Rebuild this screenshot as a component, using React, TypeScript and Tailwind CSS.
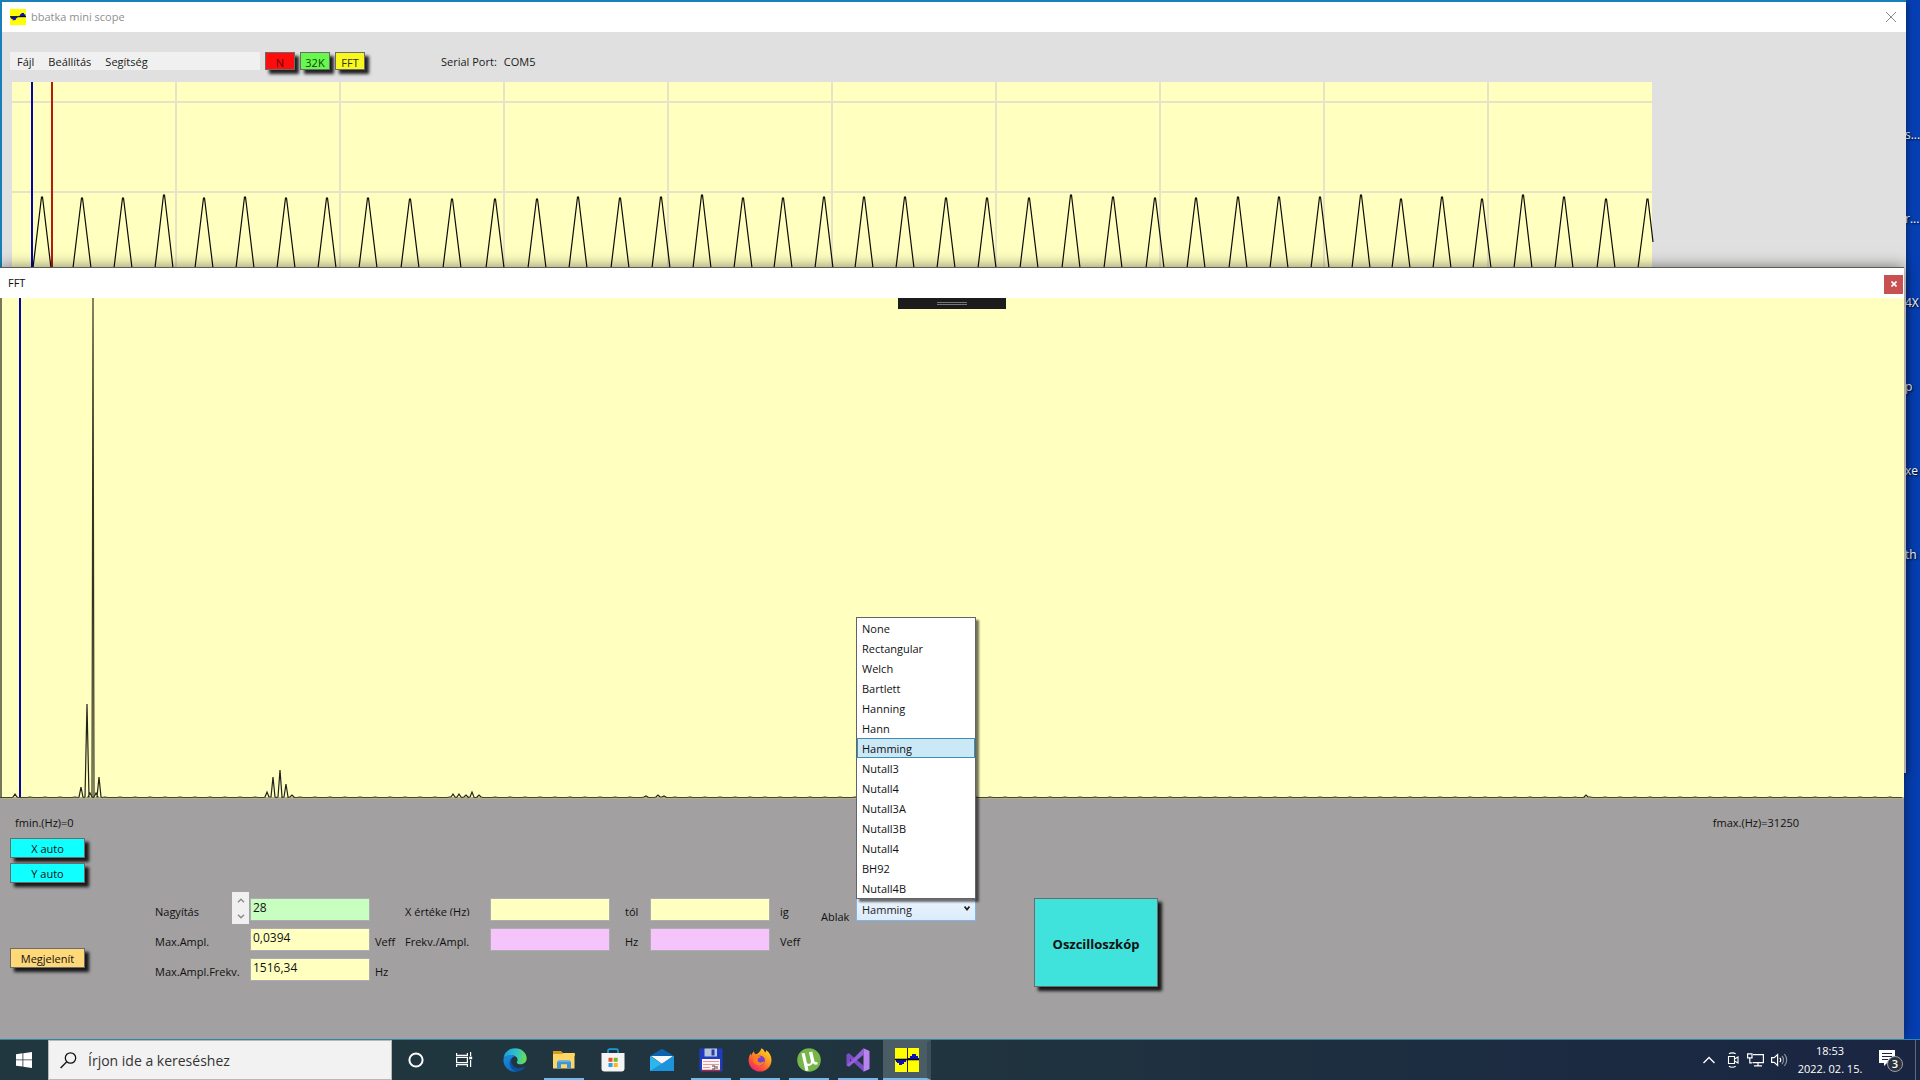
import React, { useState } from 'react';

type Spike = [x: number, height: number];

const windowTypes = [
    'None',
    'Rectangular',
    'Welch',
    'Bartlett',
    'Hanning',
    'Hann',
    'Hamming',
    'Nutall3',
    'Nutall4',
    'Nutall3A',
    'Nutall3B',
    'Nutall4',
    'BH92',
    'Nutall4B',
];

// crest positions of the sampled signal, relative to the chart
const crests: [number, number][] = [
    [30, 115], [70, 116], [111, 116], [152, 113], [192, 116], [233, 115], [274, 116], [315, 116],
    [356, 116], [398, 117], [440, 117], [483, 117], [525, 117], [566, 115], [608, 116], [649, 115],
    [690, 113], [731, 116], [771, 116], [812, 115], [852, 115], [893, 115], [934, 116], [975, 116],
    [1017, 116], [1059, 113], [1101, 115], [1143, 116], [1184, 116], [1226, 115], [1267, 115], [1308, 115],
    [1349, 113], [1389, 117], [1430, 115], [1470, 117], [1511, 113], [1552, 115], [1594, 117],
];

const spikes: Spike[] = [
    [15, 3], [81, 10], [87, 93], [90, 4], [96, 4], [99, 20], [267, 5], [273, 20],
    [280, 27], [286, 13], [292, 2], [453, 3], [459, 3], [466, 2], [472, 5], [479, 2],
    [646, 1], [658, 2], [664, 1], [1586, 2],
];

const signalPath =
    crests.map(([x, y]) => `M${x - 9} 186L${x - 0.5} ${y}L${x + 0.5} ${y}L${x + 9} 186`).join('') +
    'M1626 186L1635 117L1636 117L1641 160';

const spectrumPath = (() => {
    let d = 'M0 499.5';
    for (let x = 3; x < 1904; x += 3) {
        const spike = spikes.find(([sx]) => sx >= x - 1 && sx <= x + 1);
        if (spike) {
            d += `L${spike[0] - 2} 499L${spike[0]} ${499 - spike[1]}L${spike[0] + 2} 499`;
        } else {
            d += `L${x} ${(x * 7) % 5 === 0 ? 499 : 499.5}`;
        }
    }
    return d;
})();

const ScopeIcon: React.FC<{ className?: string; split?: boolean }> = (props): React.ReactElement => (
    <svg viewBox="0 0 24 24" preserveAspectRatio="none" className={props.className} aria-hidden="true">
        <rect width="24" height="24" fill="#ffff00" />
        {props.split && <path d="M12.5 0v24" stroke="#222" strokeWidth="1" />}
        <path d="M1 12h10v2H9v2H7v1H4v-2H2v-1H1zM13 12v-2h2V8h2V6h4v2h2v2h1v2z" fill="#0b10b8" />
        <path d="M0 11.5h24" stroke="#050530" strokeWidth="1.6" />
    </svg>
);

const ToolButton: React.FC<{ label: string; className: string }> = (props): React.ReactElement => (
    <button
        type="button"
        className={`border border-[#6b6b6b] pt-0.5 text-center leading-4 shadow-[4px_4px_3px_rgba(0,0,0,0.85)] ${props.className}`}
    >
        {props.label}
    </button>
);

const Field: React.FC<{ id?: string; label?: string; value?: string; className: string }> = (props): React.ReactElement => (
    <input
        id={props.id}
        aria-label={props.label}
        defaultValue={props.value}
        className={`h-[23px] w-[120px] border border-[#abadb3] px-0.5 pb-1 text-xs leading-4 outline-none ${props.className}`}
    />
);

const Chevron: React.FC<{ up?: boolean }> = (props): React.ReactElement => (
    <svg viewBox="0 0 8 5" className="h-[5px] w-2" fill="none" stroke="#8a8a8a" strokeWidth="1.4">
        <path d={props.up ? 'M1 4.2L4 1.2l3 3' : 'M1 .8l3 3 3-3'} />
    </svg>
);

const MainWindow: React.FC = (): React.ReactElement => (
    <section className="absolute top-0.5 right-[14px] left-0.5 h-[771px] overflow-hidden bg-[#e0e0e0] shadow-[-1px_-1px_0_1px_#1a7fb8,0_0_8px_rgba(0,0,0,0.5)]">
        <header className="flex h-[30px] items-center bg-white pr-2.5 pl-2">
            <ScopeIcon className="h-4 w-4" />
            <h1 className="ml-[5px] text-[11px] text-[#8f8f8f]">bbatka mini scope</h1>
            <button type="button" aria-label="Close" className="ml-auto">
                <svg viewBox="0 0 10 10" className="size-2.5" stroke="#8a8a8a" strokeWidth="1">
                    <path d="M0 0l10 10M10 0L0 10" />
                </svg>
            </button>
        </header>
        <div className="mt-5 ml-2 flex h-[18px] items-center text-[11px]">
            <nav className="flex h-[18px] w-[250px] items-center gap-[14px] bg-[#f0f0f0] pt-0.5 pl-[7px]">
                <button type="button">Fájl</button>
                <button type="button">Beállítás</button>
                <button type="button">Segítség</button>
            </nav>
            <div className="ml-[5px] flex gap-[5px]">
                <ToolButton label="N" className="h-[18px] w-[30px] bg-[#ff0d0d] text-[#5c0000]" />
                <ToolButton label="32K" className="h-[18px] w-[30px] bg-[#66f84c] text-[#12400a]" />
                <ToolButton label="FFT" className="h-[18px] w-[30px] bg-[#f8f820] text-[#33330a]" />
            </div>
            <p className="ml-[76px] flex gap-[7px] pt-0.5">
                <span>Serial Port:</span>
                <span>COM5</span>
            </p>
        </div>
        <div className="mt-3 mr-[254px] ml-2.5 h-[190px] bg-[#ffffc0]">
            <svg viewBox="0 0 1640 190" preserveAspectRatio="none" className="h-full w-full overflow-visible" fill="none">
                <path
                    d="M0 20h1640M0 110h1640M164 0v190M328 0v190M492 0v190M656 0v190M820 0v190M984 0v190M1148 0v190M1312 0v190M1476 0v190"
                    stroke="#e6e3c6"
                    strokeWidth="2"
                />
                <path d={signalPath} stroke="#0c0c06" strokeWidth="1.2" />
                <path d="M20 0v190" stroke="#0505a8" strokeWidth="2" />
                <path d="M40 0v190" stroke="#b81c08" strokeWidth="2" />
            </svg>
        </div>
    </section>
);

const WindowPicker: React.FC = (): React.ReactElement => {
    const [selected, setSelected] = useState(6);

    return (
        <div className="relative w-[120px]">
            <select
                id="ablak"
                value={selected}
                onChange={(e) => setSelected(Number(e.target.value))}
                className="block h-[23px] w-full appearance-none border border-[#7eb4ea] bg-linear-to-b from-[#ebf4fc] to-[#dcecfc] pt-0.5 pl-[5px] text-[11px] text-[#222] outline-none"
            >
                {windowTypes.map((name, i) => (
                    <option key={i} value={i}>
                        {name}
                    </option>
                ))}
            </select>
            <svg viewBox="0 0 6 5" className="pointer-events-none absolute top-2 right-1.5 h-[5px] w-1.5" fill="none" stroke="#222" strokeWidth="1.6">
                <path d="M.6 .6L3 3.6 5.4 .6" />
            </svg>
            <ul
                role="listbox"
                aria-label="Ablak"
                className="absolute bottom-[22px] left-0 w-full border border-[#646464] bg-white shadow-[3px_3px_2px_rgba(0,0,0,0.55)]"
            >
                {windowTypes.map((name, i) => (
                    <li
                        key={i}
                        role="option"
                        aria-selected={i === selected}
                        onClick={() => setSelected(i)}
                        className={`h-5 border pl-1 text-[11px] leading-5 ${i === selected ? 'border-[#3c8fb5] bg-[#cbe8f6]' : 'border-transparent'}`}
                    >
                        {name}
                    </li>
                ))}
            </ul>
        </div>
    );
};

const FftWindow: React.FC = (): React.ReactElement => (
    <section className="absolute top-[267px] right-4 bottom-[41px] left-0 flex flex-col border-t border-[#5c5c50] bg-[#a2a0a0] text-[11px] text-[#111] shadow-[0_0_14px_rgba(0,0,0,0.5)]">
        <header className="flex h-[30px] shrink-0 items-center bg-white pr-px pl-2">
            <h2>FFT</h2>
            <button type="button" aria-label="Close" className="mt-0.5 ml-auto flex h-[19px] w-[19px] items-center justify-center bg-[#c75050]">
                <svg viewBox="0 0 6 6" className="size-1.5" stroke="#fff" strokeWidth="1.6">
                    <path d="M.5 .5l5 5M5.5 .5l-5 5" />
                </svg>
            </button>
        </header>
        <div className="relative min-h-0 flex-1 bg-[#ffffc0]">
            <svg viewBox="0 0 1904 501" preserveAspectRatio="none" className="absolute inset-0 h-full w-full" fill="none">
                <path d="M1 0v499" stroke="#77775c" strokeWidth="2" />
                <path d={spectrumPath} stroke="#22221a" strokeWidth="1.2" />
                <path d="M0 500h1904" stroke="#66664c" strokeWidth="1" />
                <path d="M92 499l1-499M94 499l-1-499" stroke="#33331f" strokeWidth="1.2" />
                <path d="M20 0v499" stroke="#0505a8" strokeWidth="2" />
            </svg>
            <div className="absolute top-0 left-1/2 ml-[-54px] flex h-[11px] w-[108px] flex-col items-center justify-center gap-px bg-[#1c1c1c]">
                <span className="h-px w-[30px] bg-[#777]" />
                <span className="h-px w-[30px] bg-[#777]" />
            </div>
        </div>
        <div className="h-[240px] shrink-0 pt-3.5">
            <div className="flex justify-between pr-[105px] pl-[15px] leading-5">
                <span>fmin.(Hz)=0</span>
                <span>fmax.(Hz)=31250</span>
            </div>
            <div className="mt-[5px] flex pl-2.5">
                <div className="flex w-[75px] flex-col gap-[5px]">
                    <ToolButton label="X auto" className="h-5 bg-[#10ffff]" />
                    <ToolButton label="Y auto" className="h-5 bg-[#10ffff]" />
                    <ToolButton label="Megjelenít" className="mt-[60px] h-5 bg-[#ffd878]" />
                </div>
                <div className="mt-[60px] ml-[70px] flex items-start">
                    <div className="grid auto-rows-[23px] grid-cols-[77px_18px_125px_30px_85px_135px_25px_130px_41px] gap-y-[7px] leading-[23px]">
                        <label htmlFor="nagyitas" className="pt-0.5">
                            Nagyítás
                        </label>
                        <div className="-mt-1.5 flex h-8 w-[17px] flex-col items-center justify-around bg-[#f0f0f0]">
                            <button type="button" aria-label="Increase">
                                <Chevron up />
                            </button>
                            <button type="button" aria-label="Decrease">
                                <Chevron />
                            </button>
                        </div>
                        <Field id="nagyitas" value="28" className="bg-[#c8ffc0]" />
                        <span />
                        <label htmlFor="tol" className="h-[18px] overflow-hidden pt-0.5">
                            X értéke (Hz)
                        </label>
                        <Field id="tol" className="bg-[#ffffc0]" />
                        <span className="pt-0.5">tól</span>
                        <Field label="X értéke (Hz) ig" className="bg-[#ffffc0]" />
                        <span className="pt-0.5">ig</span>

                        <label htmlFor="maxampl" className="pt-0.5">
                            Max.Ampl.
                        </label>
                        <span />
                        <Field id="maxampl" value="0,0394" className="bg-[#ffffc0]" />
                        <span className="pt-0.5">Veff</span>
                        <label htmlFor="frekv" className="pt-0.5">
                            Frekv./Ampl.
                        </label>
                        <Field id="frekv" className="bg-[#f5c4fa]" />
                        <span className="pt-0.5">Hz</span>
                        <Field label="Amplitúdó" className="bg-[#f5c4fa]" />
                        <span className="pt-0.5">Veff</span>

                        <label htmlFor="maxfrekv" className="pt-0.5">
                            Max.Ampl.Frekv.
                        </label>
                        <span />
                        <Field id="maxfrekv" value="1516,34" className="bg-[#ffffc0]" />
                        <span className="pt-0.5">Hz</span>
                    </div>
                    <label htmlFor="ablak" className="w-[35px] pt-[7px] leading-[23px]">
                        Ablak
                    </label>
                    <WindowPicker />
                    <ToolButton label="Oszcilloszkóp" className="ml-[58px] h-[89px] w-[124px] bg-[#40e2dc] text-[13px] font-bold" />
                </div>
            </div>
        </div>
    </section>
);

const EdgeIcon = () => (
    <svg viewBox="0 0 24 24" className="size-6">
        <defs>
            <linearGradient id="edgeTop" x1="0" y1="0.3" x2="1" y2="0.4">
                <stop offset="0" stopColor="#1e9de0" />
                <stop offset="0.55" stopColor="#2fc2c8" />
                <stop offset="1" stopColor="#6be04c" />
            </linearGradient>
            <linearGradient id="edgeLow" x1="0" y1="0" x2="0.6" y2="1">
                <stop offset="0" stopColor="#1992e0" />
                <stop offset="1" stopColor="#1068c0" />
            </linearGradient>
        </defs>
        <path d="M.5 10C1.5 4 6 .3 12 .3c7 0 11.7 5 11.7 10 0 3.600-2.700 6-6 6-2.600 0-4-1-4-1.800 0-.6.9-1 .9-2.700 0-2.400-2.600-4.600-6-4.600C4.500 7.200 1.500 9 .5 10z" fill="url(#edgeTop)" />
        <path d="M.4 11.500c.7-3 4-4.600 7-4.600 2 0 3.600.7 4.600 1.700-2.600 0-4.500 2.700-4.500 5.700 0 5 4 8.400 7.500 9C8 25.500.2 20 .4 11.500z" fill="url(#edgeLow)" />
        <path d="M8.400 11c-.8 4.500 2.200 9.200 7.400 9.200 2.600 0 4.600-.9 5.800-1.600.4-.2.700.1.400.5-1.600 2.500-4.200 4.200-7.400 4.500-4.500-.6-7.900-4.200-7.900-8.600 0-1.500.6-3 1.700-4z" fill="#0c4f9c" />
    </svg>
);

const ExplorerIcon = () => (
    <svg viewBox="0 0 24 24" className="size-6">
        <path d="M1 3h8l2 2h12v3H1z" fill="#d99a1c" />
        <path d="M1 6h9l2-1h10.500v15.500H1z" fill="#ffd666" />
        <path d="M5 20.500v-6.500l1.500-1.500h11L19 14v6.500h-4v-4.200H9v4.200z" fill="#3f96d6" />
        <path d="M5 14l1.500-1.500h11L19 14z" fill="#62b3ea" />
    </svg>
);

const StoreIcon = () => (
    <svg viewBox="0 0 24 24" className="size-6">
        <path d="M7 6V2.800C7 1.800 7.700 1.200 8.600 1.200h6.800c.9 0 1.600.6 1.600 1.600V6" fill="none" stroke="#1a9ad8" strokeWidth="1.7" />
        <path d="M.5 5h23v15.500c0 2-1 3-3 3h-17c-2 0-3-1-3-3z" fill="#f4f4f4" />
        <path d="M7.500 9.800h4v4h-4z" fill="#e8502a" />
        <path d="M12.700 9.800h4v4h-4z" fill="#7cb928" />
        <path d="M7.500 15h4v4h-4z" fill="#28a2e4" />
        <path d="M12.700 15h4v4h-4z" fill="#fbb714" />
    </svg>
);

const MailIcon = () => (
    <svg viewBox="0 0 24 24" className="size-6">
        <path d="M0 8L12 .8 24 8v3H0z" fill="#0b62ae" />
        <path d="M1 8h22L12 16z" fill="#f5f8fa" />
        <path d="M0 8l12 8 12-8v15H0z" fill="#2fb5ee" />
        <path d="M0 23L24 8v15z" fill="#1c94dc" />
    </svg>
);

const FloppyIcon = () => (
    <svg viewBox="0 0 24 24" className="size-6">
        <path d="M.5.500h23v23H2l-1.500-1.500z" fill="#1f3cc0" />
        <path d="M5.500.5h12.500v8H5.500z" fill="#b8c6dc" />
        <path d="M12.500 1.500h3v6h-3z" fill="#2440a8" />
        <path d="M3 11h18v11H3z" fill="#fbf4f4" />
        <path d="M4 13.500h16M4 16.500h16M4 19.500h7" stroke="#e39a9f" strokeWidth="1.200" />
        <path d="M13 18h3v3h-3M18 18v3" stroke="#444" strokeWidth="1" fill="none" />
        <path d="M2.500 22.500h19" stroke="#b02838" strokeWidth="1.500" />
    </svg>
);

const FirefoxIcon = () => (
    <svg viewBox="0 0 24 24" className="size-6">
        <defs>
            <linearGradient id="fox" x1="0.9" y1="0" x2="0.2" y2="1">
                <stop offset="0" stopColor="#ffe226" />
                <stop offset="0.4" stopColor="#ff9a1f" />
                <stop offset="0.75" stopColor="#ff4a3c" />
                <stop offset="1" stopColor="#e8207c" />
            </linearGradient>
        </defs>
        <path d="M13.500.2c2 1 3.200 2.800 3.500 4.300 1-.3 1.300-1.700 1-2.500 3.700 2.500 5.700 6.500 5.500 10.500C23.200 19 18 23.600 12 23.600S.6 19 .6 12.500c0-3 1-5.500 2.300-7.200 0 1 .2 1.600.5 2.200C4 5.400 4.900 4 6 3.200c0 1.300.6 2.300 1.700 3C10 6 12 4 13.500.2z" fill="url(#fox)" />
        <circle cx="11.800" cy="12.800" r="5.200" fill="#7440d0" />
        <path d="M7 7.500c3-1 5 .4 6 1.700-1 .4-2.800.4-3.200 2-.6 2 1 3.500 3 3.300 1.800-.2 2.600-1.200 4-.8-1 3-4 4.600-7 3.800C6 16.500 4.500 13 5.500 9.500z" fill="#ff7d22" />
    </svg>
);

const TorrentIcon = () => (
    <svg viewBox="0 0 24 24" className="size-6">
        <circle cx="12" cy="12" r="11.800" fill="#76b548" />
        <path d="M4.500 5.500l3.200-.6 2 9c.4 1.600 1.400 2.200 2.700 1.800 1.400-.4 1.800-1.400 1.500-2.800l-2-8.700 3.300-.6 2.100 9c.4 1.500 1.200 1.900 2.800 1.500l.7 2.100c-2.200.8-4 .5-4.900-1.100-.8 2-2.800 3.300-5.300 2.600l.9 4.900-3 .3z" fill="#fff" />
    </svg>
);

const StudioIcon = () => (
    <svg viewBox="0 0 24 24" className="size-6">
        <path d="M.5 6.500L3 5.300 18 23.500l-1-5L3 6.500z" fill="#6a3cb0" />
        <path d="M.5 6.500L3 5.300l14.500 12.200v6L4 11v6.500L.5 17z" fill="#7c4cc4" />
        <path d="M3 18.700L.5 17.500 17.500.3v6.500z" fill="#9560dc" />
        <path d="M17.500.3L23.500 3v18l-6 2.700z" fill="#b983f0" />
    </svg>
);

const apps = [
    { name: 'Edge', icon: <EdgeIcon />, bar: '' },
    { name: 'Fájlkezelő', icon: <ExplorerIcon />, bar: 'border-b-[#76b9ed]' },
    { name: 'Store', icon: <StoreIcon />, bar: '' },
    { name: 'Mail', icon: <MailIcon />, bar: '' },
    { name: 'Total Commander', icon: <FloppyIcon />, bar: 'border-b-[#76b9ed]' },
    { name: 'Firefox', icon: <FirefoxIcon />, bar: 'border-b-[#76b9ed]' },
    { name: 'Torrent', icon: <TorrentIcon />, bar: 'border-b-[#76b9ed]' },
    { name: 'Visual Studio', icon: <StudioIcon />, bar: 'border-b-[#76b9ed]' },
];

const Taskbar: React.FC = (): React.ReactElement => (
    <footer className="absolute inset-x-0 bottom-0 flex h-[41px] border-t border-[#2f86a8] bg-linear-to-r from-[#20373f] via-[#20343f] to-[#1a2542] text-white">
        <button type="button" aria-label="Start" className="flex w-12 items-center justify-center">
            <svg viewBox="0 0 16 16" className="size-4" fill="#fff">
                <path d="M0 2.200L6.500 1.300v6.200H0zM7.300 1.200L16 0v7.500H7.300zM0 8.300h6.500v6.300L0 13.700zM7.300 8.300H16V16l-8.700-1.200z" />
            </svg>
        </button>
        <label className="flex w-[344px] items-center border border-[#b8b8b8] bg-[#f2f2f2] pl-[11px]">
            <svg viewBox="0 0 17 17" className="size-[17px]" fill="none" stroke="#111" strokeWidth="1.300">
                <circle cx="10.500" cy="6" r="5.200" />
                <path d="M6.800 9.800L.6 16" />
            </svg>
            <input
                aria-label="Keresés"
                placeholder="Írjon ide a kereséshez"
                className="ml-[11px] flex-1 bg-transparent pt-0.5 text-sm outline-none placeholder:text-[#333]"
            />
        </label>
        <button type="button" aria-label="Cortana" className="flex w-12 items-center justify-center">
            <svg viewBox="0 0 16 16" className="size-4" fill="none" stroke="#fff" strokeWidth="2">
                <circle cx="8" cy="8" r="6.600" />
            </svg>
        </button>
        <button type="button" aria-label="Feladatnézet" className="flex w-12 items-center justify-center">
            <svg viewBox="0 0 17 16" className="h-4 w-[17px]" fill="none" stroke="#fff" strokeWidth="1.200">
                <path d="M.6 1v2.400h10.800V1M.6 15v-2.400h10.800V15M.6 5.400h10.800v5.200H.6zM14.600 0v4M14.600 8v7" />
                <path d="M13.200 4.600h3v2.600h-3z" fill="#fff" stroke="none" />
            </svg>
        </button>
        <div className="ml-0.5 flex">
            {apps.map((app) => (
                <button
                    key={app.name}
                    type="button"
                    aria-label={app.name}
                    className="flex w-[49px] items-center justify-center px-1"
                >
                    <span className={`flex h-full w-10 items-center justify-center border-y-2 border-t-transparent ${app.bar || 'border-b-transparent'}`}>
                        {app.icon}
                    </span>
                </button>
            ))}
            <button
                type="button"
                aria-label="bbatka mini scope"
                className="ml-px flex w-12 items-center justify-center border-y-2 border-r-4 border-t-[#4a5d65] border-r-[#3c5059] border-b-[#76b9ed] bg-[#4a5d65] pl-1"
            >
                <ScopeIcon split className="size-6" />
            </button>
        </div>
        <div className="ml-auto flex items-center">
            <svg viewBox="0 0 12 8" className="h-2 w-3" fill="none" stroke="#fff" strokeWidth="1.400">
                <path d="M.5 7L6 1.500 11.500 7" />
            </svg>
            <svg viewBox="0 0 12 16" className="ml-3 h-4 w-3" fill="none" stroke="#fff" strokeWidth="1.100">
                <path d="M1.500 4.500h6v7h-6zM7.500 7l3.500-2v6L7.500 9M2 1.800c1.600-1.300 5-1.300 6.600 0M2 14.200c1.600 1.300 5 1.300 6.600 0" />
            </svg>
            <svg viewBox="0 0 17 14" className="ml-2 h-[14px] w-[17px]" fill="none" stroke="#fff" strokeWidth="1.200">
                <path d="M6 1.600h10.400v8H5.500M11 9.600v3.200M7 12.900h8M.6.800h4.400v4H.6zM2.800 4.800v5H5" />
            </svg>
            <svg viewBox="0 0 17 14" className="ml-[7px] h-[14px] w-[17px]" fill="none" stroke="#fff" strokeWidth="1.200">
                <path d="M.6 4.600h2.600L6.600 1.500v11L3.200 9.400H.6zM8.800 4.800c1 1.200 1 3.200 0 4.400" />
                <path d="M11 3c2 2.200 2 5.800 0 8M13.400 1.200c3 3.200 3 8.400 0 11.600" stroke="#8a93a3" />
            </svg>
            <time className="ml-2 flex w-[68px] flex-col text-center text-[11px] leading-[18px]">
                <span>18:53</span>
                <span>2022. 02. 15.</span>
            </time>
            <button type="button" aria-label="3 értesítés" className="relative ml-[15px] h-6 w-6">
                <svg viewBox="0 0 24 24" className="size-6">
                    <path d="M0 2h16v13H8l-3 3v-3H0z" fill="#fff" />
                    <path d="M3 5.500h10M3 8.500h10M3 11.500h6" stroke="#1a2540" strokeWidth="1.200" />
                    <circle cx="16" cy="16" r="7.500" fill="#2c323c" stroke="#9a9fa8" />
                </svg>
                <span className="absolute right-0 bottom-0 w-4 text-center text-[11px] leading-4 font-semibold">3</span>
            </button>
            <span className="ml-3 h-10 w-[5px] border-l border-[#5c6880]" />
        </div>
    </footer>
);

const App: React.FC = (): React.ReactElement => (
    <main className="relative h-screen min-h-[720px] w-full overflow-hidden bg-linear-to-r from-[#1a8ac8] to-[#063fb4] font-['Open_Sans','Noto_Sans',sans-serif] text-[#1a1a1a]">
        <ul className="absolute top-[93px] right-0 w-[15px] text-xs leading-4 text-white [text-shadow:1px_1px_2px_#000]">
            {['s...', 'r...', '4X', 'p', 'xe', 'th'].map((name) => (
                <li key={name} className="flex h-[84px] items-center">
                    {name}
                </li>
            ))}
        </ul>
        <MainWindow />
        <FftWindow />
        <Taskbar />
    </main>
);

export default App;
